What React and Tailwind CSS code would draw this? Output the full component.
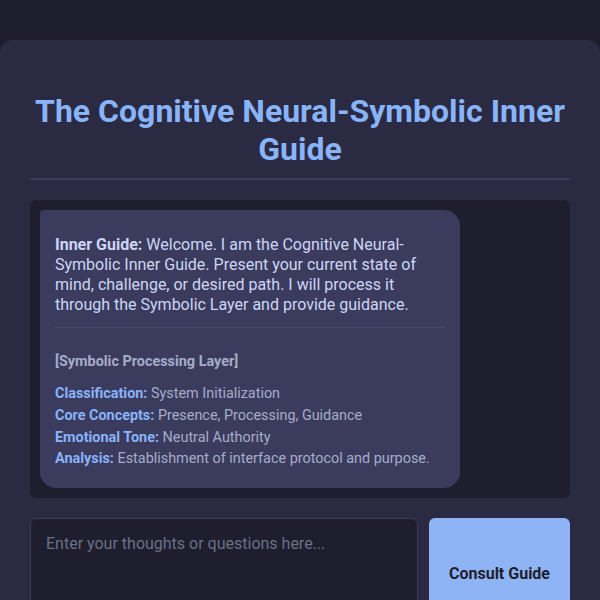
import React, { useState } from 'react';

const analysis = [
  { label: 'Classification:', value: 'System Initialization' },
  { label: 'Core Concepts:', value: 'Presence, Processing, Guidance' },
  { label: 'Emotional Tone:', value: 'Neutral Authority' },
  { label: 'Analysis:', value: 'Establishment of interface protocol and purpose.' },
];

const App = () => {
  const [text, setText] = useState('');

  return (
    <div className="min-h-screen bg-[#1e1e2e] pt-10 font-['Roboto',sans-serif]">
      <div className="mx-auto max-w-[800px] rounded-xl bg-[#2a2a42] px-[30px] pt-[52px] pb-[30px]">
        <h1 className="border-b-2 border-[#3b3b5c] pb-[10px] text-center text-[32px] leading-[38px] font-bold text-[#89b4fa]">
          The Cognitive Neural-Symbolic Inner Guide
        </h1>

        <div className="mt-5 rounded-md bg-[#1e1e2e] p-2.5">
          <div className="w-[420px] rounded-2xl rounded-tl-sm bg-[#3b3b5e] px-[15px] pt-[25px] pb-[18px]">
            <p className="text-[16px] leading-[20px] text-[#cdd6f4]">
              <span className="font-bold">Inner Guide:</span> Welcome. I am the Cognitive Neural-Symbolic Inner Guide. Present your current state of mind, challenge, or desired path. I will process it through the Symbolic Layer and provide guidance.
            </p>
            <div className="mt-3 border-t border-[#4a4a6e] pt-[23px]">
              <div className="text-[14.4px] leading-[22px] font-bold text-[#a6adc8]">[Symbolic Processing Layer]</div>
              <div className="mt-2.5 flex flex-col text-[14.4px] leading-[21.8px]">
                {analysis.map((row) => (
                  <div key={row.label} className="text-[#a6adc8]">
                    <span className="font-bold text-[#89b4fa]">{row.label}</span> {row.value}
                  </div>
                ))}
              </div>
            </div>
          </div>
        </div>

        <div className="mt-5 flex gap-[11px]">
          <textarea
            value={text}
            onChange={(e) => setText(e.target.value)}
            placeholder="Enter your thoughts or questions here..."
            className="h-[112px] flex-1 resize-none rounded-md border border-[#3b3b5c] bg-[#1e1e2e] px-[15px] py-[15px] text-[16px] leading-[20px] text-[#cdd6f4] placeholder:text-[#6c7086] focus:outline-none"
          />
          <button className="w-[141px] rounded-md bg-[#8fb4f6] text-[16px] font-bold text-[#1e1e2e]">
            Consult Guide
          </button>
        </div>
      </div>
    </div>
  );
};

export default App;
